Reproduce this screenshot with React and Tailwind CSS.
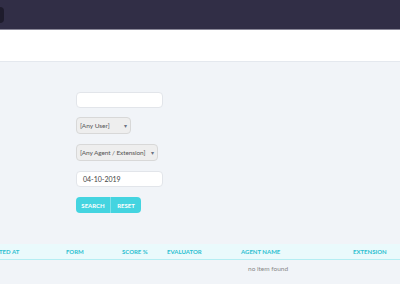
import React from 'react';

const columns = [
  { label: 'Created At', w: 'w-[82px]' },
  { label: 'Form', w: 'w-[56px]' },
  { label: 'Score %', w: 'w-[45px]' },
  { label: 'Evaluator', w: 'w-[74px]' },
  { label: 'Agent Name', w: 'w-[112px]' },
  { label: 'Extension', w: 'w-[60px]' },
];

const Caret = () => (
  <span className="ml-auto text-[6px] text-gray-500 leading-none">▾</span>
);

export default function App() {
  return (
    <div className="w-[400px] h-[284px] overflow-hidden bg-[#f1f4f8] font-['Lato','Liberation_Sans',sans-serif]">
      {/* Top bar */}
      <div className="h-[30px] bg-[#312e46] flex items-center border-b border-[#8a8898]">
        <div className="w-[4px] h-[16px] bg-[#1e1c2c] rounded-r-sm" />
      </div>

      {/* White band */}
      <div className="h-[32px] bg-white border-b border-[#e4e8ee]" />

      {/* Filter form */}
      <div className="pl-[76px] pt-[30px] flex flex-col items-start">
        <input
          className="w-[87px] h-[16px] bg-white border border-[#e2e5ea] rounded-sm"
          readOnly
        />
        <div className="mt-[9px] w-[55px] h-[17px] bg-[#eeeeee] border border-[#d8d8d8] rounded-sm flex items-center px-[3px] text-[6.5px] text-[#555] whitespace-nowrap">
          [Any User]
          <Caret />
        </div>
        <div className="mt-[10px] w-[82px] h-[17px] bg-[#eeeeee] border border-[#d8d8d8] rounded-sm flex items-center gap-[3px] px-[3px] text-[6.5px] tracking-[-0.1px] text-[#555] whitespace-nowrap">
          [Any Agent / Extension]
          <Caret />
        </div>
        <div className="mt-[10px] w-[87px] h-[16px] bg-white border border-[#e2e5ea] rounded-sm flex items-center px-[6px] text-[7px] text-[#444]">
          04-10-2019
        </div>
        <div className="mt-[10px] flex h-[16px] rounded-sm overflow-hidden text-[6px] font-bold text-white uppercase">
          <div className="w-[35px] bg-[#44d4e0] flex items-center justify-center border-r border-[#7fe2ea]">Search</div>
          <div className="w-[30px] bg-[#44d4e0] flex items-center justify-center">Reset</div>
        </div>
      </div>

      {/* Results table */}
      <div className="mt-[31px] ml-[-16px]">
        <div className="flex h-[16px] items-center bg-[#eafafc] border-b border-[#b5eef3] w-[440px]">
          {columns.map((c) => (
            <div key={c.label} className={`${c.w} shrink-0 text-[6px] font-bold uppercase text-[#2cc0d0] whitespace-nowrap`}>
              {c.label}
            </div>
          ))}
        </div>
        <div className="pl-[264px] pt-[4px] text-[6.5px] text-[#888]">no item found</div>
      </div>
    </div>
  );
}
